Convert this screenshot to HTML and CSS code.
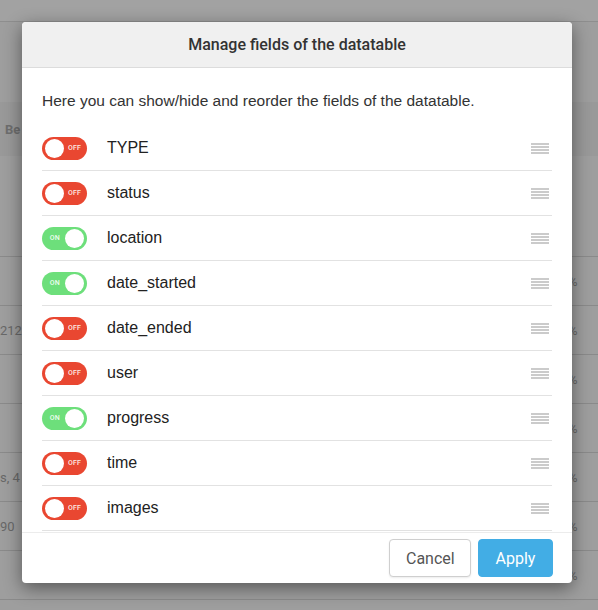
FILE: index.html
```html
<!DOCTYPE html>
<html lang="en">
<head>
<meta charset="utf-8">
<title>Manage fields</title>
<link rel="stylesheet" href="styles.css">
</head>
<body>
<div class="page">
  <div class="topbar"></div>
  <div class="spacer"></div>
  <div class="thead"><span class="th">Be</span></div>
  <div class="trow first"><span class="cell-l"></span><span class="cell-r"></span></div>
  <div class="trow"><span class="cell-l"></span><span class="cell-r">%</span></div>
  <div class="trow"><span class="cell-l">212</span><span class="cell-r">%</span></div>
  <div class="trow"><span class="cell-l"></span><span class="cell-r">%</span></div>
  <div class="trow"><span class="cell-l"></span><span class="cell-r">%</span></div>
  <div class="trow"><span class="cell-l">s, 4</span><span class="cell-r">%</span></div>
  <div class="trow"><span class="cell-l">90</span><span class="cell-r">%</span></div>
  <div class="trow"><span class="cell-l"></span><span class="cell-r">%</span></div>
</div>

<div class="modal">
  <div class="modal-header">Manage fields of the datatable</div>
  <div class="modal-body">
    <p class="desc">Here you can show/hide and reorder the fields of the datatable.</p>
    <ul class="fields">
      <li class="field"><span class="toggle off"><span class="tlabel">OFF</span><span class="knob"></span></span><span class="fname">TYPE</span><svg class="handle" viewBox="0 0 18 11"><rect y="0" width="18" height="2"/><rect y="3" width="18" height="2"/><rect y="6" width="18" height="2"/><rect y="9" width="18" height="2"/></svg></li>
      <li class="field"><span class="toggle off"><span class="tlabel">OFF</span><span class="knob"></span></span><span class="fname">status</span><svg class="handle" viewBox="0 0 18 11"><rect y="0" width="18" height="2"/><rect y="3" width="18" height="2"/><rect y="6" width="18" height="2"/><rect y="9" width="18" height="2"/></svg></li>
      <li class="field"><span class="toggle on"><span class="tlabel">ON</span><span class="knob"></span></span><span class="fname">location</span><svg class="handle" viewBox="0 0 18 11"><rect y="0" width="18" height="2"/><rect y="3" width="18" height="2"/><rect y="6" width="18" height="2"/><rect y="9" width="18" height="2"/></svg></li>
      <li class="field"><span class="toggle on"><span class="tlabel">ON</span><span class="knob"></span></span><span class="fname">date_started</span><svg class="handle" viewBox="0 0 18 11"><rect y="0" width="18" height="2"/><rect y="3" width="18" height="2"/><rect y="6" width="18" height="2"/><rect y="9" width="18" height="2"/></svg></li>
      <li class="field"><span class="toggle off"><span class="tlabel">OFF</span><span class="knob"></span></span><span class="fname">date_ended</span><svg class="handle" viewBox="0 0 18 11"><rect y="0" width="18" height="2"/><rect y="3" width="18" height="2"/><rect y="6" width="18" height="2"/><rect y="9" width="18" height="2"/></svg></li>
      <li class="field"><span class="toggle off"><span class="tlabel">OFF</span><span class="knob"></span></span><span class="fname">user</span><svg class="handle" viewBox="0 0 18 11"><rect y="0" width="18" height="2"/><rect y="3" width="18" height="2"/><rect y="6" width="18" height="2"/><rect y="9" width="18" height="2"/></svg></li>
      <li class="field"><span class="toggle on"><span class="tlabel">ON</span><span class="knob"></span></span><span class="fname">progress</span><svg class="handle" viewBox="0 0 18 11"><rect y="0" width="18" height="2"/><rect y="3" width="18" height="2"/><rect y="6" width="18" height="2"/><rect y="9" width="18" height="2"/></svg></li>
      <li class="field"><span class="toggle off"><span class="tlabel">OFF</span><span class="knob"></span></span><span class="fname">time</span><svg class="handle" viewBox="0 0 18 11"><rect y="0" width="18" height="2"/><rect y="3" width="18" height="2"/><rect y="6" width="18" height="2"/><rect y="9" width="18" height="2"/></svg></li>
      <li class="field"><span class="toggle off"><span class="tlabel">OFF</span><span class="knob"></span></span><span class="fname">images</span><svg class="handle" viewBox="0 0 18 11"><rect y="0" width="18" height="2"/><rect y="3" width="18" height="2"/><rect y="6" width="18" height="2"/><rect y="9" width="18" height="2"/></svg></li>
    </ul>
  </div>
  <div class="modal-footer">
    <button class="btn btn-cancel">Cancel</button>
    <button class="btn btn-apply">Apply</button>
  </div>
</div>
</body>
</html>
```

FILE: styles.css
```css
* { box-sizing: border-box; }
html, body { margin: 0; padding: 0; }
body {
  width: 598px;
  height: 610px;
  overflow: hidden;
  background: #9e9e9e;
  font-family: Roboto, "Liberation Sans", sans-serif;
  position: relative;
}

/* background datatable (dimmed) */
.page { width: 598px; }
.topbar { height: 22px; background: #a2a2a2; border-bottom: 1px solid #8e8e8e; }
.spacer { height: 80px; }
.thead {
  height: 54px;
  background: #999999;
  display: flex;
  align-items: center;
  padding-left: 5px;
}
.th { font-size: 13px; font-weight: 700; color: #6e6e6e; }
.trow {
  height: 49px;
  border-bottom: 1px solid #8a8a8a;
  display: flex;
  align-items: center;
  justify-content: space-between;
  font-size: 13px;
  color: #686868;
}
.trow.first { height: 101px; }
.cell-l { width: 30px; white-space: nowrap; overflow: hidden; }
.cell-r { width: 30px; padding-left: 0; }

/* modal */
.modal {
  position: absolute;
  top: 22px;
  left: 22px;
  width: 550px;
  background: #fff;
  border-radius: 4px;
  box-shadow: 0 5px 18px rgba(0,0,0,0.45);
  overflow: hidden;
}
.modal-header {
  height: 46px;
  background: #f0f0f0;
  border-bottom: 1px solid #dcdcdc;
  display: flex;
  align-items: center;
  justify-content: center;
  font-family: Roboto, sans-serif;
  font-weight: 500;
  font-size: 16px;
  color: #333;
}
.modal-body { padding: 23px 20px 0; }
.desc {
  margin: 0 0 15px;
  line-height: 20px;
  font-family: "Liberation Sans", Arial, sans-serif;
  font-size: 15.5px;
  color: #333;
}
.fields { list-style: none; margin: 0; padding: 0; }
.field {
  height: 45px;
  border-bottom: 1px solid #e2e2e2;
  display: flex;
  align-items: center;
  gap: 20px;
}
.fname {
  flex: 1;
  font-family: "Liberation Sans", Arial, sans-serif;
  font-size: 16px;
  color: #222;
}
.handle { width: 18px; height: 11px; fill: #cbcbcb; margin-right: 3px; }

.toggle {
  width: 45px;
  height: 23px;
  border-radius: 12px;
  display: flex;
  align-items: center;
  padding: 0 3px;
  gap: 4px;
}
.toggle.off { background: #e94731; flex-direction: row-reverse; justify-content: flex-end; }
.toggle.on { background: #6ddf7b; justify-content: flex-end; }
.knob { width: 19px; height: 19px; border-radius: 50%; background: #fff; }
.tlabel {
  font-family: Roboto, sans-serif;
  font-size: 7px;
  font-weight: 500;
  color: rgba(255,255,255,0.9);
  letter-spacing: 0.2px;
}
.toggle.on .tlabel { margin-right: 1px; }

.modal-footer {
  margin-top: 1px;
  border-top: 1px solid #ececec;
  padding: 6px 19px;
  display: flex;
  justify-content: flex-end;
  gap: 7px;
}
.btn {
  height: 38px;
  border-radius: 4px;
  font-family: Roboto, sans-serif;
  font-size: 16px;
  padding: 0 16px;
  cursor: pointer;
}
.btn-cancel { width: 82px; background: #fff; border: 1px solid #cfcfcf; color: #555; box-shadow: 0 1px 2px rgba(0,0,0,0.08); }
.btn-apply { width: 75px; background: #42ade5; border: 1px solid #42ade5; color: #fff; }
```
